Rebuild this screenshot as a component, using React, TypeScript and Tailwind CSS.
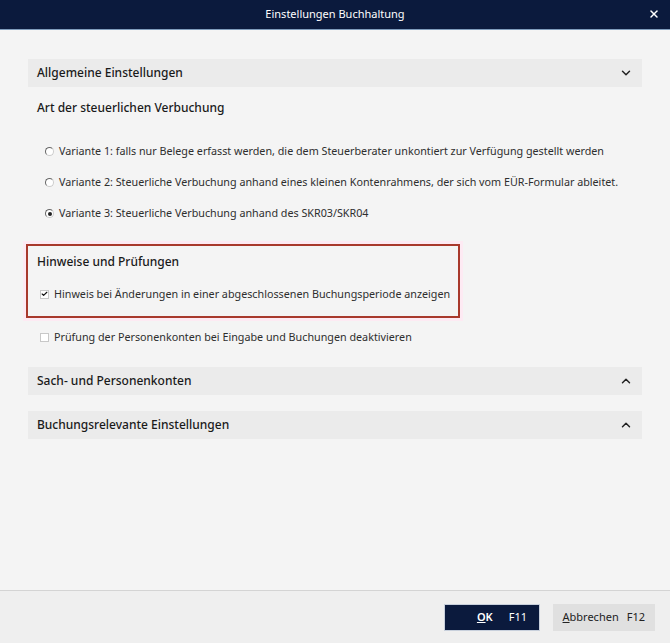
import { ChevronDown, ChevronUp, X, Check } from "lucide-react";

const font = { fontFamily: '"Noto Sans", "Open Sans", sans-serif' };

function SectionHeader({ title, open }: { title: string; open?: boolean }) {
  return (
    <div className="h-[28px] bg-[#ebebeb] flex items-center justify-between pl-[9px] pr-[9px]">
      <span className="text-[12px] font-medium text-[#1a1a1a]">{title}</span>
      {open ? (
        <ChevronDown className="w-[14px] h-[14px] text-[#222]" strokeWidth={2.5} />
      ) : (
        <ChevronUp className="w-[14px] h-[14px] text-[#222]" strokeWidth={2.5} />
      )}
    </div>
  );
}

function Radio({ label, checked }: { label: string; checked?: boolean }) {
  return (
    <div className="flex items-center h-[31px] pl-[17px]">
      <span className="w-[9px] h-[9px] rounded-full border border-[#666] border-b-[#ccc] border-r-[#ccc] bg-white flex items-center justify-center mr-[5px]">
        {checked && <span className="w-[4px] h-[4px] rounded-full bg-[#222]" />}
      </span>
      <span className="text-[10.75px] text-[#2e2e2e] whitespace-nowrap">{label}</span>
    </div>
  );
}

function CheckRow({ label, checked }: { label: string; checked?: boolean }) {
  return (
    <div className="flex items-center">
      <span className="w-[9px] h-[9px] border border-[#c8c8c8] bg-white flex items-center justify-center mr-[5px]">
        {checked && <Check className="w-[10px] h-[10px] text-[#111]" strokeWidth={4} />}
      </span>
      <span className="text-[10.75px] text-[#2e2e2e] whitespace-nowrap">{label}</span>
    </div>
  );
}

export default function App() {
  return (
    <div className="w-[670px] h-[643px] flex flex-col bg-[#f4f4f4]" style={font}>
      <div className="h-[30px] bg-[#0b1a3d] border-b border-[#7f9cbc] flex items-center justify-center relative">
        <span className="text-[11px] text-white">Einstellungen Buchhaltung</span>
        <X className="absolute right-[10px] top-[8px] w-[12px] h-[12px] text-white" strokeWidth={3} />
      </div>

      <div className="flex-1 px-[28px] pt-[29px]">
        <SectionHeader title="Allgemeine Einstellungen" open />

        <div className="pl-[9px] pt-[12px] pb-[20px] text-[12px] font-medium text-[#1a1a1a]">
          Art der steuerlichen Verbuchung
        </div>

        <div className="-mt-[1px]">
          <Radio label="Variante 1: falls nur Belege erfasst werden, die dem Steuerberater unkontiert zur Verfügung gestellt werden" />
          <Radio label="Variante 2: Steuerliche Verbuchung anhand eines kleinen Kontenrahmens, der sich vom EÜR-Formular ableitet." />
          <Radio label="Variante 3: Steuerliche Verbuchung anhand des SKR03/SKR04" checked />
        </div>

        <div className="-ml-[2px] mt-[15px] w-[434px] h-[74px] border-2 border-[#a8392c] shadow-[0_0_0_3px_#fdeaf3] pl-[9px] pt-[7px]">
          <div className="text-[12px] font-medium text-[#1a1a1a]">Hinweise und Prüfungen</div>
          <div className="pt-[15px] pl-[3px]">
            <CheckRow label="Hinweis bei Änderungen in einer abgeschlossenen Buchungsperiode anzeigen" checked />
          </div>
        </div>

        <div className="pl-[12px] pt-[11px]">
          <CheckRow label="Prüfung der Personenkonten bei Eingabe und Buchungen deaktivieren" />
        </div>

        <div className="mt-[22px]">
          <SectionHeader title="Sach- und Personenkonten" />
        </div>
        <div className="mt-[16px]">
          <SectionHeader title="Buchungsrelevante Einstellungen" />
        </div>
      </div>

      <div className="h-[53px] border-t border-[#d4d4d4] bg-[#efefef] flex items-center justify-end gap-[13px] pr-[15px]">
        <button className="w-[96px] h-[27px] bg-[#0b1a3d] border border-[#c8d0dc] text-white text-[11px] flex items-center justify-end pr-[12px] gap-[16px]">
          <span className="font-semibold underline">O</span>
          <span className="-ml-[16px] font-semibold">K</span>
          <span>F11</span>
        </button>
        <button className="w-[102px] h-[27px] bg-[#e0e0e0] text-[#222] text-[11px] flex items-center justify-end pr-[10px] gap-[8px]">
          <span>
            <span className="underline">A</span>bbrechen
          </span>
          <span>F12</span>
        </button>
      </div>
    </div>
  );
}
